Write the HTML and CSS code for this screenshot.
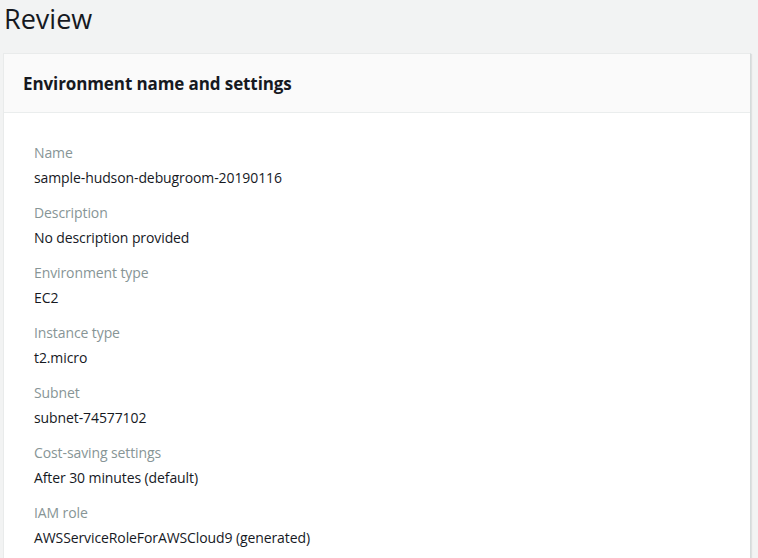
FILE: index.html
```html
<!DOCTYPE html>
<html>
<head>
<meta charset="utf-8">
<link rel="stylesheet" href="styles.css">
</head>
<body>
<div class="page">
  <h1 class="title">Review</h1>
  <section class="card">
    <header class="card-header"><h2>Environment name and settings</h2></header>
    <div class="card-body">
      <div class="field"><div class="label">Name</div><div class="value">sample-hudson-debugroom-20190116</div></div>
      <div class="field"><div class="label">Description</div><div class="value">No description provided</div></div>
      <div class="field"><div class="label">Environment type</div><div class="value">EC2</div></div>
      <div class="field"><div class="label">Instance type</div><div class="value">t2.micro</div></div>
      <div class="field"><div class="label">Subnet</div><div class="value">subnet-74577102</div></div>
      <div class="field"><div class="label">Cost-saving settings</div><div class="value">After 30 minutes (default)</div></div>
      <div class="field"><div class="label">IAM role</div><div class="value">AWSServiceRoleForAWSCloud9 (generated)</div></div>
    </div>
  </section>
</div>
</body>
</html>
```
FILE: styles.css
```css
html, body { margin: 0; padding: 0; }
body {
  background: #f2f3f3;
  font-family: "Open Sans", "Liberation Sans", sans-serif;
  color: #16191f;
  overflow: hidden;
}
.page { padding: 0 7px 0 3px; }
.title {
  margin: 0;
  padding: 2px 0 0 1px;
  font-size: 27px;
  font-weight: 400;
  line-height: 34px;
  height: 51px;
  color: #16191f;
}
.card {
  background: #fff;
  border: 1px solid #e9ebeb;
  border-right-color: #d5dbdb;
  box-shadow: 1px 1px 1px rgba(0,0,0,0.08);
}
.card-header {
  background: #fafafa;
  border-bottom: 1px solid #eaeded;
  height: 58px;
  display: flex;
  align-items: center;
  padding-left: 19px;
}
.card-header h2 {
  margin: 0;
  font-size: 17px;
  font-weight: 700;
  letter-spacing: -0.1px;
}
.card-body { padding: 29px 30px 40px; display: flex; flex-direction: column; gap: 14px; }
.field { display: flex; flex-direction: column; gap: 4px; }
.label { color: #879596; font-size: 14px; line-height: 21px; letter-spacing: -0.1px; }
.value { font-size: 14px; line-height: 21px; letter-spacing: -0.1px; }
```
